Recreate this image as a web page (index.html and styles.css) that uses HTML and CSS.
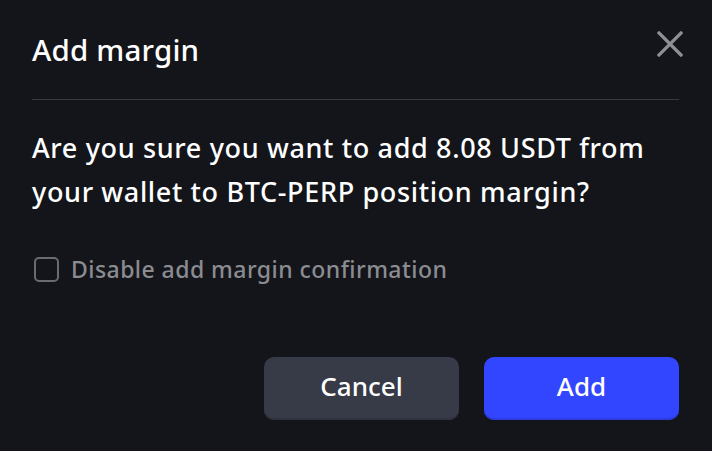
FILE: index.html
```html
<!DOCTYPE html>
<html>
<head>
<meta charset="utf-8">
<link rel="stylesheet" href="styles.css">
</head>
<body>
<div class="dialog">
  <div class="header">
    <h1 class="title">Add margin</h1>
    <button class="close" aria-label="Close">
      <svg width="26" height="26" viewBox="0 0 26 26"><path d="M2 2 L24 24 M24 2 L2 24" stroke="#8e8f94" stroke-width="3.2" stroke-linecap="square" fill="none"/></svg>
    </button>
  </div>
  <p class="message">Are you sure you want to add 8.08 USDT from<br>your wallet to BTC-PERP position margin?</p>
  <label class="check">
    <span class="box"></span>
    <span class="check-label">Disable add margin confirmation</span>
  </label>
  <div class="actions">
    <button class="btn btn-cancel">Cancel</button>
    <button class="btn btn-add">Add</button>
  </div>
</div>
</body>
</html>
```
FILE: styles.css
```css
html, body {
  margin: 0;
  padding: 0;
  background: #14151a;
  width: 712px;
  height: 451px;
  overflow: hidden;
}
.dialog {
  padding: 0 33px 0 32px;
  font-family: "Noto Sans", sans-serif;
  color: #ffffff;
}
.header {
  display: flex;
  justify-content: space-between;
  align-items: center;
  height: 100px;
  border-bottom: 1px solid #3a3b41;
  box-sizing: border-box;
}
.title {
  margin: 0;
  font-size: 29.5px;
  font-weight: 500;
  line-height: 40px;
  letter-spacing: 0.2px;
}
.close {
  background: none;
  border: 0;
  padding: 0;
  margin-top: -12px;
  margin-right: -4px;
  width: 26px;
  height: 26px;
  display: flex;
}
.message {
  margin: 26px 0 0;
  font-size: 27px;
  font-weight: 500;
  line-height: 44px;
  letter-spacing: 0.65px;
  white-space: nowrap;
}
.check {
  display: flex;
  align-items: center;
  gap: 12px;
  margin-top: 39px;
  height: 32px;
  padding-left: 2px;
}
.box {
  width: 21px;
  height: 21px;
  border: 2.5px solid #6a6b70;
  border-radius: 5px;
}
.check-label {
  font-size: 23px;
  font-weight: 500;
  letter-spacing: 0.45px;
  color: #8b8c91;
}
.actions {
  display: flex;
  justify-content: flex-end;
  gap: 25px;
  margin-top: 72px;
}
.btn {
  width: 195px;
  height: 63px;
  border: 0;
  border-radius: 10px;
  padding: 0 0 6px;
  font-family: "Noto Sans", sans-serif;
  font-size: 26px;
  font-weight: 500;
  color: #ffffff;
}
.btn-cancel {
  background: #373a47;
  box-shadow: inset 0 -2px 0 #30323d;
}
.btn-add {
  background: #3346ff;
  box-shadow: inset 0 -2px 0 #2c3ce0;
}
```
